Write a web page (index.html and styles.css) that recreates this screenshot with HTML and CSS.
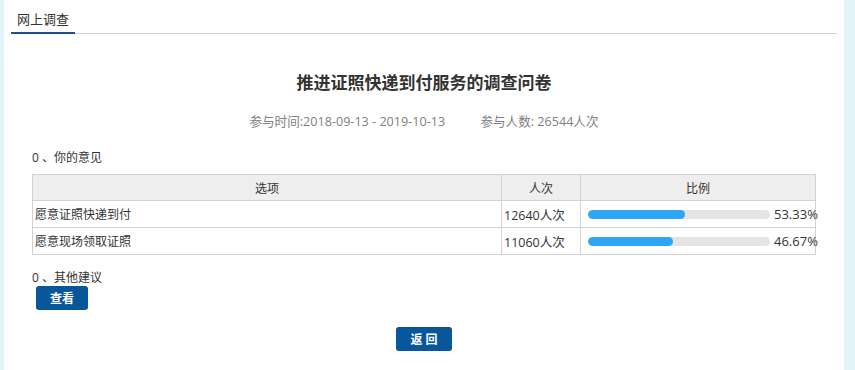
FILE: index.html
```html
<!DOCTYPE html>
<html>
<head>
  <title>网上调查</title>
  <link rel="stylesheet" href="styles.css">
</head>
<body>
  <div class="panel">
    <div class="tabs">
      <span class="tab active">网上调查</span>
    </div>

    <div class="survey">
      <h1 class="title">推进证照快递到付服务的调查问卷</h1>
      <p class="meta">
        <span>参与时间:2018-09-13 - 2019-10-13</span>
        <span>参与人数: 26544人次</span>
      </p>

      <p class="question">0 、你的意见</p>
      <table class="result-table">
        <thead>
          <tr>
            <th>选项</th>
            <th class="col-count">人次</th>
            <th class="col-ratio">比例</th>
          </tr>
        </thead>
        <tbody>
          <tr>
            <td>愿意证照快递到付</td>
            <td class="num">12640人次</td>
            <td>
              <div class="ratio">
                <div class="bar"><div class="fill" style="width: 53.33%"></div></div>
                <span class="percent">53.33%</span>
              </div>
            </td>
          </tr>
          <tr>
            <td>愿意现场领取证照</td>
            <td class="num">11060人次</td>
            <td>
              <div class="ratio">
                <div class="bar"><div class="fill" style="width: 46.67%"></div></div>
                <span class="percent">46.67%</span>
              </div>
            </td>
          </tr>
        </tbody>
      </table>

      <p class="question other">0 、其他建议</p>
      <button class="btn btn-view">查看</button>

      <div class="back">
        <button class="btn btn-back">返 回</button>
      </div>
    </div>
  </div>
</body>
</html>
```

FILE: styles.css
```css
body {
  margin: 0;
  background-color: #e3f4f9;
  font-family: "Open Sans", "Noto Sans CJK SC", sans-serif;
  font-size: 12px;
  color: #333333;
}

.panel {
  margin-left: 4px;
  width: 826px;
  height: 370px;
  padding: 8px 7px 0 7px;
  background-color: #ffffff;
}

.tabs {
  display: flex;
  border-bottom: 1px solid #d0d0d0;
}

.tab {
  display: block;
  width: 64px;
  height: 26px;
  line-height: 22px;
  text-align: center;
  font-size: 13px;
  color: #333333;
  box-sizing: border-box;
  margin-bottom: -1px;
}

.tab.active {
  border-bottom: 2px solid #1d4f9c;
}

.survey {
  padding: 0 21px 0 21px;
}

.title {
  margin: 34px 0 0 0;
  height: 30px;
  line-height: 30px;
  text-align: center;
  font-size: 17px;
  font-weight: bold;
  color: #333333;
}

.meta {
  margin: 15px 0 0 0;
  line-height: 18px;
  text-align: center;
  font-size: 12.6px;
  color: #808080;
}

.meta span + span {
  margin-left: 32px;
}

.question {
  margin: 18px 0 0 0;
  line-height: 18px;
  font-size: 12px;
}

.result-table {
  width: 784px;
  margin-top: 7px;
  border-collapse: collapse;
  table-layout: fixed;
  font-size: 12px;
}

.result-table th,
.result-table td {
  box-sizing: border-box;
  border: 1px solid #d2d2d2;
  height: 27px;
  padding: 0 2px;
}

.result-table th {
  height: 26px;
  background-color: #eeeeee;
  font-weight: normal;
  text-align: center;
}

.result-table td.num {
  font-size: 12.5px;
}

.col-count {
  width: 79px;
}

.col-ratio {
  width: 235px;
}

.ratio {
  display: flex;
  align-items: center;
  padding-left: 5px;
  white-space: nowrap;
}

.bar {
  flex: none;
  width: 182px;
  height: 9px;
  border-radius: 5px;
  background-color: #e4e4e4;
  overflow: hidden;
}

.fill {
  height: 100%;
  border-radius: 5px;
  background-color: #2ea6f5;
}

.percent {
  margin-left: 4px;
  font-size: 13px;
}

.question.other {
  margin-top: 14px;
}

.btn {
  display: block;
  border: none;
  border-radius: 3px;
  background-color: #07579a;
  color: #ffffff;
  font-family: "Open Sans", "Noto Sans CJK SC", sans-serif;
  font-size: 12px;
  font-weight: bold;
  height: 24px;
  cursor: pointer;
}

.btn-view {
  width: 52px;
  margin: -1px 0 0 4px;
}

.back {
  display: flex;
  justify-content: center;
  margin-top: 17px;
}

.btn-back {
  width: 56px;
}
```
